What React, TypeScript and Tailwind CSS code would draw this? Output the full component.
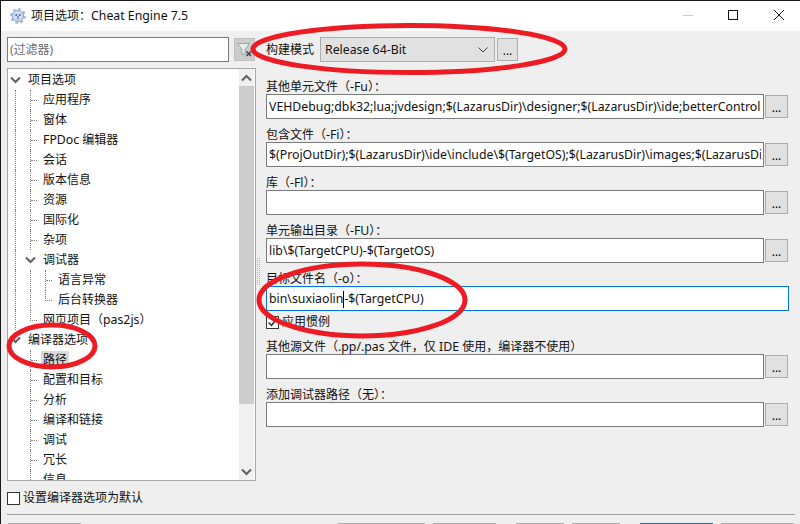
import React from 'react';

const ui = 'font-["Noto_Sans","Noto_Sans_CJK_SC",sans-serif]';

// latin runs sit a touch larger than the 12px CJK glyphs, as in the dialog font
const mix = (text: string) =>
  text.split(/([\x20-\x7e]+)/).map((part, i) =>
    i % 2 === 1 ? (
      <span key={i} className="text-[12.3px]">
        {part}
      </span>
    ) : (
      part
    ),
  );

type Cell = 'v' | 't' | 'l' | 'c' | '';

interface TreeRowProps {
  cells: Cell[];
  label: string;
  selected?: boolean;
}

const Chevron: React.FC<{ up?: boolean; className?: string }> = ({ up, className }) => (
  <svg width="11" height="8" viewBox="0 0 11 8" className={className}>
    <path d={up ? 'M1 6.5 L5.5 2 L10 6.5' : 'M1 1.5 L5.5 6 L10 1.5'} fill="none" stroke="#606060" strokeWidth="2" />
  </svg>
);

const TreeCell: React.FC<{ kind: Cell }> = ({ kind }) => {
  if (kind === 'c') {
    return (
      <span className="w-[15px] h-full shrink-0 flex items-center pl-[2px]">
        <Chevron />
      </span>
    );
  }
  if (kind === 'v') {
    return (
      <span className="w-[15px] h-full shrink-0 pl-[7px]">
        <span className="block h-full border-l border-dotted border-[#808080]" />
      </span>
    );
  }
  if (kind === 't') {
    return (
      <span className="w-[15px] h-full shrink-0 pl-[7px]">
        <span className="flex items-center h-full border-l border-dotted border-[#808080]">
          <span className="block w-[6px] border-t border-dotted border-[#808080]" />
        </span>
      </span>
    );
  }
  if (kind === 'l') {
    return (
      <span className="w-[15px] h-full shrink-0 pl-[7px]">
        <span className="block w-[7px] h-[11px] border-l border-b border-dotted border-[#808080]" />
      </span>
    );
  }
  return <span className="w-[15px] h-full shrink-0" />;
};

const TreeRow: React.FC<TreeRowProps> = ({ cells, label, selected }) => (
  <div className="flex h-5 items-center whitespace-nowrap shrink-0">
    {cells.map((c, i) => (
      <TreeCell key={i} kind={c} />
    ))}
    <span className={`ml-[3px] px-[2px] leading-[18px] h-[18px] ${selected ? 'bg-[#d9d9d9]' : ''}`}>{mix(label)}</span>
  </div>
);

const treeRows: TreeRowProps[] = [
  { cells: ['c'], label: '项目选项' },
  { cells: ['v', 't'], label: '应用程序' },
  { cells: ['v', 't'], label: '窗体' },
  { cells: ['v', 't'], label: 'FPDoc 编辑器' },
  { cells: ['v', 't'], label: '会话' },
  { cells: ['v', 't'], label: '版本信息' },
  { cells: ['v', 't'], label: '资源' },
  { cells: ['v', 't'], label: '国际化' },
  { cells: ['v', 't'], label: '杂项' },
  { cells: ['v', 'c'], label: '调试器' },
  { cells: ['v', 'v', 't'], label: '语言异常' },
  { cells: ['v', 'v', 'l'], label: '后台转换器' },
  { cells: ['v', 'l'], label: '网页项目（pas2js）' },
  { cells: ['c'], label: '编译器选项' },
  { cells: ['', 't'], label: '路径', selected: true },
  { cells: ['', 't'], label: '配置和目标' },
  { cells: ['', 't'], label: '分析' },
  { cells: ['', 't'], label: '编译和链接' },
  { cells: ['', 't'], label: '调试' },
  { cells: ['', 't'], label: '冗长' },
  { cells: ['', 't'], label: '信息' },
];

const Dots: React.FC = () => (
  <button className="w-[23px] h-[23px] ml-px shrink-0 bg-[#e1e1e1] border border-[#adadad] text-[12px] leading-[24px] text-black">
    ...
  </button>
);

const PathField: React.FC<{ label: string; value?: string }> = ({ label, value }) => (
  <div className="h-[48px] shrink-0">
    <div className="h-[17px] pt-px leading-[17px] whitespace-nowrap">{mix(label)}</div>
    <div className="flex items-center h-[25px] w-[522px]">
      <div className="w-[498px] h-[25px] shrink-0 bg-white border border-[#7a7a7a] pl-[2px] leading-[23px]">
        <div className="w-[492px] whitespace-nowrap overflow-hidden text-[12.3px]">{value}</div>
      </div>
      <Dots />
    </div>
  </div>
);

const BottomButton: React.FC<{ className: string; primary?: boolean }> = ({ className, primary }) => (
  <div className={`${className} h-px bg-[#e1e1e1] border-t shrink-0 ${primary ? 'border-[#0078d7]' : 'border-[#adadad]'}`} />
);

export default function App() {
  return (
    <div className={`relative w-[800px] h-[524px] overflow-hidden flex flex-col bg-[#efefef] border-t border-l border-[#1a1a1a] text-[12px] text-[#111] ${ui}`}>
      {/* Title bar */}
      <div className="h-[30px] shrink-0 bg-white flex items-center pl-[9px]">
        <svg width="16" height="16" viewBox="0 0 16 16" className="shrink-0">
          <circle cx="8" cy="8" r="6.7" fill="none" stroke="#a9bde0" strokeWidth="2.6" strokeDasharray="2.6 2.66" />
          <circle cx="8" cy="8" r="5.6" fill="#cfdcf2" stroke="#8ba2cc" strokeWidth="1" />
          <circle cx="6.2" cy="7" r="1" fill="#4d6496" />
          <circle cx="9.8" cy="7" r="1" fill="#4d6496" />
          <path d="M8 8v3.4" stroke="#6d84b4" strokeWidth="1.4" />
        </svg>
        <span className="ml-[5px]">{mix('项目选项：Cheat Engine 7.5')}</span>
        <div className="ml-auto flex items-center">
          <svg width="46" height="30" viewBox="0 0 46 30"><path d="M21 14.5h10" stroke="#ccc" /></svg>
          <svg width="46" height="30" viewBox="0 0 46 30"><rect x="20.5" y="9.5" width="9" height="9" fill="none" stroke="#111" /></svg>
          <svg width="46" height="30" viewBox="0 0 46 30"><path d="M20 9l10 10M30 9l-10 10" stroke="#111" fill="none" /></svg>
        </div>
      </div>

      <div className="flex flex-1 min-h-0">
        {/* Left side */}
        <div className="w-[249px] ml-[6px] shrink-0 pt-[6px] flex flex-col">
          <div className="flex items-center h-[25px]">
            <div className="w-[222px] h-[25px] bg-white border border-[#7a7a7a] px-[2px] leading-[23px] text-[#6d6d6d]">(过滤器)</div>
            <div className="ml-[5px] w-[21px] h-[23px] bg-[#cccccc] border border-[#bfbfbf] flex items-center justify-center">
              <svg width="17" height="17" viewBox="0 0 17 17">
                <path d="M1.5 2.5h12L9 8.5v5H6v-5z" fill="#e6eeee" stroke="#97a5a5" />
                <path d="M10.5 10.5l4.5 4.5M15 10.5L10.5 15" stroke="#444" strokeWidth="1.6" />
              </svg>
            </div>
          </div>
          <div className="mt-[6px] h-[413px] bg-white border border-[#a6a6a6] flex overflow-hidden">
            <div className="w-[231px] h-full pt-px overflow-hidden flex flex-col">
              {treeRows.map((r, i) => (
                <TreeRow key={i} {...r} />
              ))}
            </div>
            <div className="w-[15px] h-full bg-[#f0f0f0] flex flex-col items-center shrink-0">
              <div className="h-[17px] flex items-center"><Chevron up /></div>
              <div className="w-full h-[318px] bg-[#cdcdcd]" />
              <div className="mt-auto h-[17px] flex items-center"><Chevron /></div>
            </div>
          </div>
          <div className="mt-[10px] flex items-center h-[14px]">
            <span className="w-[13px] h-[13px] border border-[#333] bg-white" />
            <span className="ml-[3px]">设置编译器选项为默认</span>
          </div>
        </div>

        {/* Splitter */}
        <div className="w-[10px] shrink-0 flex flex-col justify-center items-start pl-px pb-[3px]">
          <div className="w-[3px] h-[27px] border-x border-dotted border-[#b5b5b5]" />
        </div>

        {/* Right side */}
        <div className="flex-1 min-w-0 pt-[6px] flex flex-col">
          <div className="flex items-center h-[25px] mb-[15px] shrink-0">
            <span className="w-[54px]">构建模式</span>
            <div className="w-[175px] h-[25px] bg-[#e1e1e1] border border-[#adadad] flex items-center pl-[4px] pr-[6px] justify-between">
              <span className="text-[12.3px] pt-px">Release 64-Bit</span>
              <svg width="10" height="6" viewBox="0 0 10 6"><path d="M.5.5L5 5 9.5.5" fill="none" stroke="#444" /></svg>
            </div>
            <div className="ml-[2px] w-[21px] h-[23px] bg-[#e1e1e1] border border-[#adadad] text-center leading-[24px]">...</div>
          </div>
          <PathField label="其他单元文件（-Fu）：" value="VEHDebug;dbk32;lua;jvdesign;$(LazarusDir)\designer;$(LazarusDir)\ide;betterControl" />
          <PathField label="包含文件（-Fi）：" value="$(ProjOutDir);$(LazarusDir)\ide\include\$(TargetOS);$(LazarusDir)\images;$(LazarusDir)" />
          <PathField label="库（-Fl）：" />
          <PathField label="单元输出目录（-FU）：" value="lib\$(TargetCPU)-$(TargetOS)" />
          <div className="h-[17px] pt-px leading-[17px] shrink-0">{mix('目标文件名（-o）：')}</div>
          <div className="w-[523px] h-[25px] shrink-0 bg-white border border-[#0078d7] px-[2px] leading-[23px] whitespace-nowrap text-[12.3px]">
            bin\suxiaolin<span className="inline-block w-px h-[17px] bg-black align-middle" />-$(TargetCPU)
          </div>
          <div className="flex items-center h-[14px] mt-[4px] shrink-0">
            <span className="w-[13px] h-[13px] border border-[#333] bg-white flex items-center justify-center">
              <svg width="11" height="11" viewBox="0 0 11 11"><path d="M1.5 5.5L4.5 8.5 9.5 2" fill="none" stroke="#222" strokeWidth="1.4" /></svg>
            </span>
            <span className="ml-[3px]">应用惯例</span>
          </div>
          <div className="mt-[8px]">
            <PathField label="其他源文件（.pp/.pas 文件，仅 IDE 使用，编译器不使用）" />
            <PathField label="添加调试器路径（无）：" />
          </div>
        </div>
      </div>

      {/* Footer */}
      <div className="ml-[6px] mr-[5px] h-[10px] shrink-0 border-t border-[#a0a0a0] flex items-end">
        <BottomButton className="ml-px w-[73px]" />
        <BottomButton className="ml-[257px] w-[87px]" />
        <BottomButton className="ml-[8px] w-[63px]" />
        <BottomButton className="ml-[20px] w-[48px]" />
        <BottomButton className="ml-[8px] w-[48px]" />
        <BottomButton className="ml-[20px] w-[73px]" primary />
        <BottomButton className="ml-[8px] w-[73px]" />
      </div>

      {/* Red marker annotations */}
      <svg className="absolute -left-px -top-px pointer-events-none" width="800" height="524" viewBox="0 0 800 524">
        <ellipse cx="409" cy="49" rx="156" ry="23.5" fill="none" stroke="#ed1c24" strokeWidth="5" />
        <ellipse cx="362" cy="300" rx="103" ry="36" fill="none" stroke="#ed1c24" strokeWidth="5" />
        <ellipse cx="52" cy="346" rx="43" ry="21" fill="none" stroke="#ed1c24" strokeWidth="5" />
      </svg>
    </div>
  );
}
